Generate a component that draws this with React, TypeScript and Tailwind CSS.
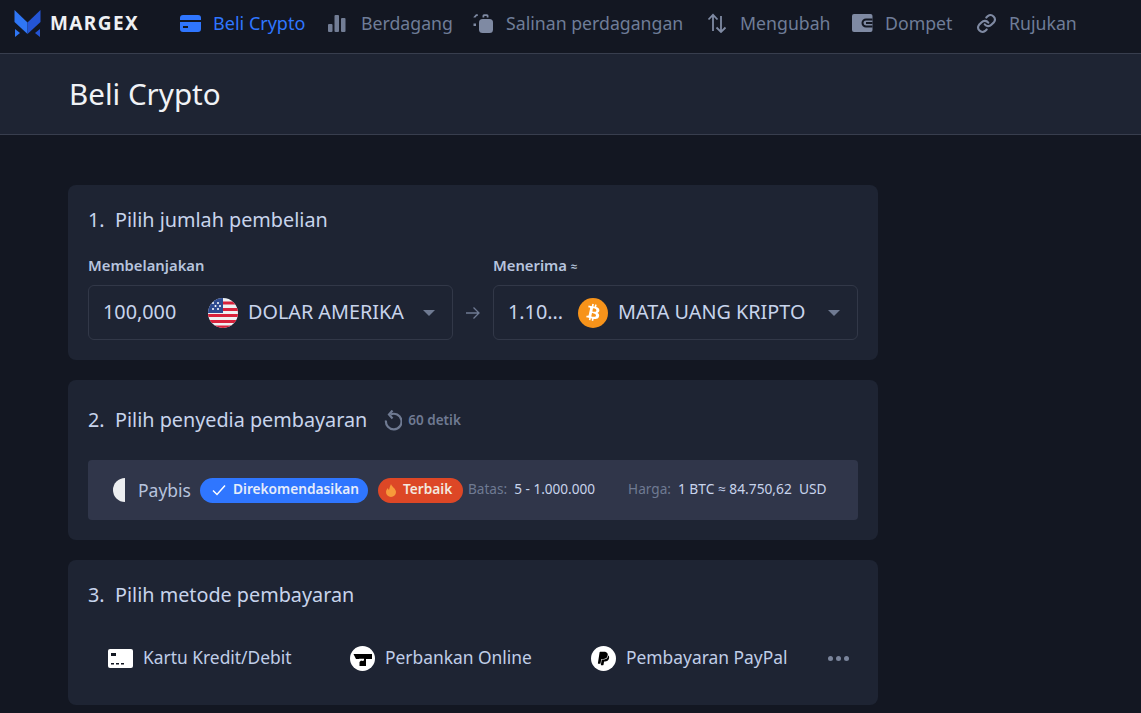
import React from "react";
import { FaBtc, FaPaypal } from "react-icons/fa";

const navItems = [
  { label: "Berdagang", w: "w-[90px]", icon: <svg width="18" height="18" viewBox="0 0 18 18" fill="#727d95"><rect x="0" y="10" width="4.500" height="8" rx="1"/><rect x="6.500" y="1" width="4.500" height="17" rx="1"/><rect x="13" y="4" width="4.500" height="14" rx="1"/></svg> },
  { label: "Salinan perdagangan", w: "w-[179px]", icon: <svg width="20" height="20" viewBox="0 0 20 20" fill="#7f8aa3"><rect x="6" y="6" width="14" height="14" rx="3.500"/><path d="M9.500 4.500V2.800A1.500 1.500 0 0 1 11 1.300h3A1.500 1.500 0 0 1 15.500 2.800V4.500h-1.800V3h-2.400v1.500z"/><path d="M0.500 4 3 1.200h1.800V3H3.700L2.500 4.500H.5zM0.500 10.500H3V13H0.500z"/></svg> },
  { label: "Mengubah", w: "w-[90px]", icon: <svg width="20" height="20" viewBox="0 0 20 20" fill="none" stroke="#7f8aa3" strokeWidth="1.800"><path d="M6 18V2M1.500 6.500 6 1.800 10.500 6.500M14 3v16M9.500 14.500 14 19l4.500-4.500"/></svg> },
  { label: "Dompet", w: "w-[69px]", icon: <svg width="21" height="18" viewBox="0 0 21 18"><rect width="20.500" height="18" rx="2" fill="#7f8aa3"/><path d="M20.500 4.500H14a4.500 4.500 0 0 0 0 9h6.500v-2H14a2.500 2.500 0 0 1 0-5h6.500z" fill="#131722"/><rect x="14" y="8" width="6.500" height="2" fill="#131722"/></svg> },
  { label: "Rujukan", w: "w-[69px]", icon: <svg width="21" height="21" viewBox="0 0 24 24" fill="none" stroke="#7f8aa3" strokeWidth="2.400" strokeLinecap="round"><path d="M10 13a5 5 0 0 0 7.500.500l3-3a5 5 0 0 0-7-7l-1.700 1.700"/><path d="M14 11a5 5 0 0 0-7.500-.500l-3 3a5 5 0 0 0 7 7l1.700-1.700"/></svg> },
];

function Caret() {
  return <span className="h-0 w-0 border-x-[6px] border-t-[6px] border-x-transparent border-t-[#6f7a92]" />;
}

function UsFlag() {
  return (
    <svg width="30" height="30" viewBox="0 0 30 30" className="shrink-0">
      <defs><clipPath id="c"><circle cx="15" cy="15" r="15" /></clipPath></defs>
      <g clipPath="url(#c)">
        <rect width="30" height="30" fill="#eef0f2" />
        <rect y="3.500" x="15" width="15" height="3" fill="#d8213b" />
        <rect y="10" x="15" width="15" height="3" fill="#d8213b" />
        <rect y="16" width="30" height="3" fill="#d8213b" />
        <rect y="22" width="30" height="3" fill="#d8213b" />
        <rect y="27.500" width="30" height="3" fill="#d8213b" />
        <rect width="15" height="15" fill="#2d4a8f" />
        {[[5,5],[10,5],[7.500,8],[12,8],[5,11],[10,11]].map(([x,y],i)=><circle key={i} cx={x} cy={y} r="1" fill="#fff" />)}
      </g>
    </svg>
  );
}

function BtcIcon() {
  return (
    <span className="flex h-[30px] w-[30px] shrink-0 items-center justify-center rounded-full bg-[#f7931a]">
      <FaBtc size={17} color="#fff" className="rotate-[12deg]" />
    </span>
  );
}

function Title({ n, text }: { n: string; text: string }) {
  return (
    <h2 className="flex text-[19.800px] leading-[26px] text-[#c8d4ec]">
      <span className="w-[27px]">{n}</span>
      <span>{text}</span>
    </h2>
  );
}

function Field({ label, value, icon, cur, valueW }: { label: React.ReactNode; value: string; icon: React.ReactNode; cur: string; valueW: string }) {
  return (
    <div className="flex w-[365px] flex-col">
      <div className="h-[20px] text-[14.800px] leading-[20px] font-semibold text-[#b7c4de]">{label}</div>
      <div className="mt-[10px] flex h-[55px] items-center rounded-md border border-[#323848] pl-[14px] pr-[17px]">
        <span className={`${valueW} pb-[2px] text-[19.800px] text-[#c8d4ec]`}>{value}</span>
        {icon}
        <span className="ml-[10px] pb-[2px] text-[19.800px] whitespace-nowrap text-[#c8d4ec]">{cur}</span>
        <span className="flex-1" />
        <Caret />
      </div>
    </div>
  );
}

function Method({ icon, text, w }: { icon: React.ReactNode; text: string; w: string }) {
  return (
    <div className={`flex ${w} items-center`}>
      {icon}
      <span className="ml-[10px] pb-[2px] text-[17.400px] whitespace-nowrap text-[#c0cee8]">{text}</span>
    </div>
  );
}

export default function App() {
  return (
    <div className="h-[713px] w-[1141px] overflow-hidden bg-[#131722] font-['Noto_Sans','Open_Sans',sans-serif]">
      <nav className="flex h-[54px] items-center border-b border-[#383e4e] bg-[#131722] pb-[6px] pl-[14px]">
        <svg width="27" height="27" viewBox="0 0 27 27" className="shrink-0">
          <path d="M0.500 0 13.500 12.500V24L0.500 12Z" fill="#2f76f5" />
          <path d="M26.500 0 13.500 12.500V24L26.500 12Z" fill="#2455d6" />
          <path d="M1 19 6 23 1 27Z" fill="#2f76f5" />
          <path d="M26 19 21 23 26 27Z" fill="#2455d6" />
        </svg>
        <span className="ml-[9px] text-[19px] font-bold tracking-[1.400px] text-[#eef0f3]">MARGEX</span>
        <span className="ml-[41px] flex items-center">
          <svg width="21" height="17" viewBox="0 0 21 17" fill="#2f76ff"><path d="M3 0h15a3 3 0 0 1 3 3v2H0V3a3 3 0 0 1 3-3z"/><path fillRule="evenodd" d="M0 7h21v7a3 3 0 0 1-3 3H3a3 3 0 0 1-3-3zm3 4v2h5v-2z"/></svg>
          <span className="ml-[12px] w-[92px] text-[18px] whitespace-nowrap text-[#2f76ff]">Beli Crypto</span>
        </span>
        <span className="ml-[23px] flex items-center gap-[22px]">
          {navItems.map((it) => (
            <span key={it.label} className="flex items-center gap-[12px]">
              <span className="flex w-[21px] justify-start">{it.icon}</span>
              <span className={`${it.w} text-[17.700px] whitespace-nowrap text-[#6f7d98]`}>{it.label}</span>
            </span>
          ))}
        </span>
      </nav>
      <header className="flex h-[81px] items-center border-b border-[#383e4e] bg-[#1e2433] pl-[69px]">
        <h1 className="text-[29.600px] text-[#f0f2f6]">Beli Crypto</h1>
      </header>

      <main className="ml-[68px] mt-[50px] flex w-[810px] flex-col gap-[20px]">
        <section className="h-[175px] rounded-lg bg-[#1e2433] px-[20px] pt-[22px]">
          <Title n="1." text="Pilih jumlah pembelian" />
          <div className="mt-[22px] flex">
            <Field label="Membelanjakan" value="100,000" valueW="w-[105px]" icon={<UsFlag />} cur="DOLAR AMERIKA" />
            <div className="flex w-[40px] items-end justify-center pb-[20px]">
              <svg width="14" height="14" viewBox="0 0 14 14" fill="none" stroke="#6f7a92" strokeWidth="1.300"><path d="M0 7h13M7.500 1.500 13 7l-5.500 5.500" /></svg>
            </div>
            <Field
              label={<>Menerima <span className="text-[12px]">≈</span></>}
              value="1.10..."
              valueW="w-[70px]"
              icon={<BtcIcon />}
              cur="MATA UANG KRIPTO"
            />
          </div>
        </section>

        <section className="h-[160px] rounded-lg bg-[#1e2433] px-[20px] pt-[27px]">
          <div className="flex items-center">
            <Title n="2." text="Pilih penyedia pembayaran" />
            <svg width="18" height="21" viewBox="0 0 18 21" fill="none" stroke="#6f7a92" strokeWidth="2.200" className="ml-[17px]">
              <path d="M6.500 4.500a7.800 7.800 0 1 1-4.500 6" />
              <path d="M8.500 0.500 5 4.500l3.500 4" />
            </svg>
            <span className="ml-[6px] text-[13.500px] font-semibold text-[#6f7a92]">60 detik</span>
          </div>
          <div className="mt-[27px] flex h-[60px] items-center rounded bg-[#30364a] pl-[25px]">
            <span className="h-[24px] w-[12px] rounded-l-full bg-[#eceef0]" />
            <span className="ml-[13px] text-[17.500px] text-[#b7c4de]">Paybis</span>
            <span className="ml-[9px] flex h-[25px] w-[168px] items-center rounded-full bg-[#2f76ff] pl-[12px]">
              <svg width="14" height="12" viewBox="0 0 14 12" fill="none" stroke="#fff" strokeWidth="1.500"><path d="M1 6.500 5 10.500 13 1.500" /></svg>
              <span className="ml-[7px] pb-[2px] text-[13.700px] font-semibold text-[#e6ecfa]">Direkomendasikan</span>
            </span>
            <span className="ml-[10px] flex h-[25px] w-[85px] items-center rounded-full bg-[#dd4726] pl-[8px]">
              <svg width="10" height="13" viewBox="0 0 10 13" fill="#f79a3a"><path d="M5 0c.5 2.500 5 4.500 5 8a5 5 0 0 1-10 0c0-2 1-3 2-4 0 1 .5 1.500 1 2C3.500 4 4 2 5 0z" /></svg>
              <span className="ml-[7px] pb-[2px] text-[13.700px] font-semibold text-[#f3e8df]">Terbaik</span>
            </span>
            <span className="ml-[5px] pb-[1px] text-[13.600px] text-[#6f7a92]">Batas:</span>
            <span className="ml-[7px] pb-[1px] text-[13.600px] whitespace-nowrap text-[#c8d4ec]">5 - 1.000.000</span>
            <span className="ml-[33px] pb-[1px] text-[13.600px] text-[#6f7a92]">Harga:</span>
            <span className="ml-[7px] pb-[1px] text-[13.750px] whitespace-pre text-[#c8d4ec]">1 BTC ≈ 84.750,62  USD</span>
          </div>
        </section>

        <section className="h-[145px] rounded-lg bg-[#1e2433] px-[20px] pt-[22px]">
          <Title n="3." text="Pilih metode pembayaran" />
          <div className="ml-[20px] mt-[36px] flex items-center">
            <Method
              w="w-[242px]"
              text="Kartu Kredit/Debit"
              icon={<svg width="25" height="19" viewBox="0 0 25 19" className="shrink-0"><rect width="25" height="19" rx="2" fill="#fff" /><rect x="3" y="4" width="5" height="3" fill="#131722" /><rect x="3" y="14" width="3" height="1.500" fill="#131722" /><rect x="8" y="14" width="3" height="1.500" fill="#131722" /><rect x="13" y="14" width="3" height="1.500" fill="#131722" /></svg>}
            />
            <Method
              w="w-[241px]"
              text="Perbankan Online"
              icon={<svg width="25" height="25" viewBox="0 0 25 25" className="shrink-0"><circle cx="12.500" cy="12.500" r="12.500" fill="#fff" /><path d="M3.500 8H22v5h-6v7H9.500v-4l3-3H6z" fill="#000" /><path d="M9 12.800h5v1.800l-2 .4z" fill="#fff" /></svg>}
            />
            <Method
              w="w-[237px]"
              text="Pembayaran PayPal"
              icon={<span className="flex h-[25px] w-[25px] shrink-0 items-center justify-center rounded-full bg-white"><FaPaypal size={15} color="#000" /></span>}
            />
            <svg width="21" height="5" viewBox="0 0 21 5" fill="#7a849b"><circle cx="2.500" cy="2.500" r="2.500" /><circle cx="10.500" cy="2.500" r="2.500" /><circle cx="18.500" cy="2.500" r="2.500" /></svg>
          </div>
        </section>
      </main>
    </div>
  );
}
